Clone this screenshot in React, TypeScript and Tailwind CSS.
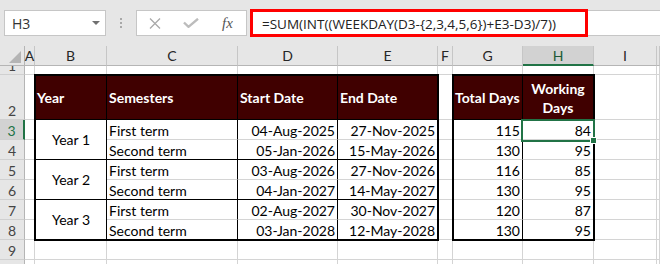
import type { ReactNode } from "react";

const CAL = "font-['Lato',sans-serif]";
const SEG = "font-['Open_Sans',sans-serif]";

const years = [
  {
    year: "Year 1",
    terms: [
      ["First term", "04-Aug-2025", "27-Nov-2025", 115, 84],
      ["Second term", "05-Jan-2026", "15-May-2026", 130, 95],
    ],
  },
  {
    year: "Year 2",
    terms: [
      ["First term", "03-Aug-2026", "27-Nov-2026", 116, 85],
      ["Second term", "04-Jan-2027", "14-May-2027", 130, 95],
    ],
  },
  {
    year: "Year 3",
    terms: [
      ["First term", "02-Aug-2027", "30-Nov-2027", 120, 87],
      ["Second term", "03-Jan-2028", "12-May-2028", 130, 95],
    ],
  },
];

const letters = ["", "A", "B", "C", "D", "E", "F", "G", "H", "I", ""];

function FormulaBar() {
  return (
    <div className="flex h-[46px] bg-[#e6e6e6] pl-[4px] pt-[10px]">
      {/* name box */}
      <div className="flex h-[26px] w-[102px] items-center justify-between border border-[#c6c6c6] bg-white pl-[7px] pr-[5px]">
        <span className={`${SEG} text-[14px] text-[#333]`}>H3</span>
        <svg width="8" height="4" viewBox="0 0 8 4">
          <polygon points="0,0 8,0 4,4" fill="#707070" />
        </svg>
      </div>

      <div className="flex h-[26px] w-[30px] items-center justify-center">
        <div className="flex flex-col gap-[2px]">
          <span className="h-[2px] w-[2px] bg-[#a8a8a8]" />
          <span className="h-[2px] w-[2px] bg-[#a8a8a8]" />
          <span className="h-[2px] w-[2px] bg-[#a8a8a8]" />
        </div>
      </div>

      {/* cancel / enter / fx */}
      <div className="flex h-[26px] w-[111px] border border-[#c6c6c6] bg-white">
        <div className="flex w-[36px] items-center justify-center">
          <svg width="12" height="11" viewBox="0 0 12 11">
            <path d="M1 0.5 L11 10.5 M11 0.5 L1 10.5" stroke="#a9a9a9" strokeWidth="1.3" fill="none" />
          </svg>
        </div>
        <div className="flex w-[36px] items-center justify-center">
          <svg width="16" height="10" viewBox="0 0 16 10">
            <path d="M1 4.5 L5.5 8.8 L15 0.8" stroke="#bcbcbc" strokeWidth="2.4" fill="none" />
          </svg>
        </div>
        <div className="flex w-[37px] items-center justify-center">
          <span className="font-['Liberation_Serif',serif] text-[15px] italic text-[#555]">fx</span>
        </div>
      </div>

      {/* highlighted formula */}
      <div className="ml-[3px] -mt-[1px] flex h-[28px] w-[338px] items-center border-[3px] border-[#ff0000] bg-white pl-[9px] pt-[2px]">
        <span className={`${SEG} text-[13.5px] text-[#222]`}>
          =SUM(INT((WEEKDAY(D3-{"{"}2,3,4,5,6{"}"})+E3-D3)/7))
        </span>
      </div>
      <div className="h-[26px] flex-1 border-y border-[#c6c6c6] bg-white" />
    </div>
  );
}

function MainTable() {
  const body: ReactNode[] = [];
  years.forEach((g, gi) => {
    g.terms.forEach((t, ti) => {
      const bottom =
        ti === 0 ? " border-b border-b-[#d4d4d4]" : gi < 2 ? " border-b border-b-black" : "";
      if (ti === 0) {
        body.push(
          <div
            key={g.year}
            className={
              "row-span-2 flex items-center justify-center border-r border-r-black" +
              (gi < 2 ? " border-b border-b-black" : "")
            }
          >
            {g.year}
          </div>
        );
      }
      body.push(
        <div key={`${gi}${ti}c`} className={"flex items-end border-r border-r-black pl-[2px] leading-[17px]" + bottom}>
          {t[0]}
        </div>,
        <div key={`${gi}${ti}d`} className={"flex items-end justify-end border-r border-r-black pr-[2px] leading-[17px]" + bottom}>
          {t[1]}
        </div>,
        <div key={`${gi}${ti}e`} className={"flex items-end justify-end pr-[2px] leading-[17px]" + bottom}>
          {t[2]}
        </div>
      );
    });
  });

  return (
    <div className={`col-start-3 col-end-7 row-start-3 row-end-10 -m-px grid grid-cols-[71px_131px_100px_99px] grid-rows-[44px_repeat(5,20px)_19px] border-2 border-black bg-white text-[14px] text-black ${CAL}`}>
      <div className="flex items-center border-r border-b border-black bg-[#400000] pl-[1px] font-bold text-white">Year</div>
      <div className="flex items-center border-r border-b border-black bg-[#400000] pl-[2px] font-bold text-white">Semesters</div>
      <div className="flex items-center border-r border-b border-black bg-[#400000] pl-[2px] font-bold text-white">Start Date</div>
      <div className="flex items-center border-b border-black bg-[#400000] pl-[2px] font-bold text-white">End Date</div>
      {body}
    </div>
  );
}

function DaysTable() {
  const rows = years.flatMap((g) => g.terms);
  return (
    <div className={`col-start-8 col-end-10 row-start-3 row-end-10 -m-px grid grid-cols-[69px_70px] grid-rows-[44px_repeat(5,20px)_19px] border-2 border-black bg-white text-[14px] text-black ${CAL}`}>
      <div className="flex items-center whitespace-nowrap border-r border-b border-black bg-[#400000] pl-[1px] font-bold text-white">
        Total Days
      </div>
      <div className="flex items-center justify-center border-b border-black bg-[#400000] text-center font-bold leading-[19px] text-white">
        Working Days
      </div>
      {rows.map((t, i) => {
        const bottom = i < 5 ? " border-b border-b-[#d4d4d4]" : "";
        return [
          <div key={`g${i}`} className={"flex items-end justify-end border-r border-r-black pr-[2px] leading-[17px]" + bottom}>
            {t[3]}
          </div>,
          <div key={`h${i}`} className={"relative flex items-end justify-end pr-[2px] leading-[17px]" + bottom}>
            {t[4]}
            {i === 0 && (
              <>
                <div className="absolute -left-[2px] -top-[1px] z-10 h-[23px] w-[74px] border-2 border-[#217346]" />
                <div className="absolute left-[67px] top-[17px] z-10 h-[7px] w-[7px] border border-white bg-[#217346]" />
              </>
            )}
          </div>,
        ];
      })}
    </div>
  );
}

function Sheet() {
  const cells: ReactNode[] = [];
  for (let r = 0; r <= 10; r++) {
    for (let c = 0; c <= 10; c++) {
      const inTable = r >= 2 && r <= 8 && ((c >= 2 && c <= 5) || (c >= 7 && c <= 8));
      if (inTable) continue;
      const key = `${r}-${c}`;
      if (r === 0 && c === 0) {
        cells.push(
          <div key={key} className="flex items-end justify-end border-r border-b border-[#b5b5b5] bg-[#e6e6e6] pr-[3px] pb-[2px]">
            <svg width="12" height="12" viewBox="0 0 12 12">
              <polygon points="12,0 12,12 0,12" fill="#b4b4b4" />
            </svg>
          </div>
        );
      } else if (r === 0) {
        cells.push(
          <div
            key={key}
            className={
              c === 8
                ? "flex items-center justify-center border-r border-b-2 border-r-[#c6c6c6] border-b-[#217346] bg-[#d2d2d2] text-[14px] text-[#1d5a38]"
                : "flex items-center justify-center border-r border-b border-r-[#c6c6c6] border-b-[#b5b5b5] bg-[#e6e6e6] text-[14px] text-[#262626]"
            }
          >
            {letters[c]}
          </div>
        );
      } else if (c === 0) {
        cells.push(
          <div
            key={key}
            className={
              r === 3
                ? "flex items-end justify-center overflow-hidden border-r-2 border-b border-r-[#217346] border-b-[#d0d0d0] bg-[#d2d2d2] text-[14px] leading-[17px] text-[#217346]"
                : "flex items-end justify-center overflow-hidden border-r border-b border-r-[#b5b5b5] border-b-[#d0d0d0] bg-[#e6e6e6] text-[14px] leading-[17px] text-[#444]"
            }
          >
            {r}
          </div>
        );
      } else {
        cells.push(<div key={key} className="border-r border-b border-[#d4d4d4]" />);
      }
    }
  }

  return (
    <div className={`grid grid-cols-[25px_10px_72px_131px_100px_100px_15px_70px_71px_63px_1fr] grid-rows-[20px_9px_45px_repeat(8,20px)] bg-white ${CAL}`}>
      {cells}
      <MainTable />
      <DaysTable />
    </div>
  );
}

export default function App() {
  return (
    <div className="h-[264px] w-[660px] overflow-hidden bg-white">
      <FormulaBar />
      <Sheet />
    </div>
  );
}
